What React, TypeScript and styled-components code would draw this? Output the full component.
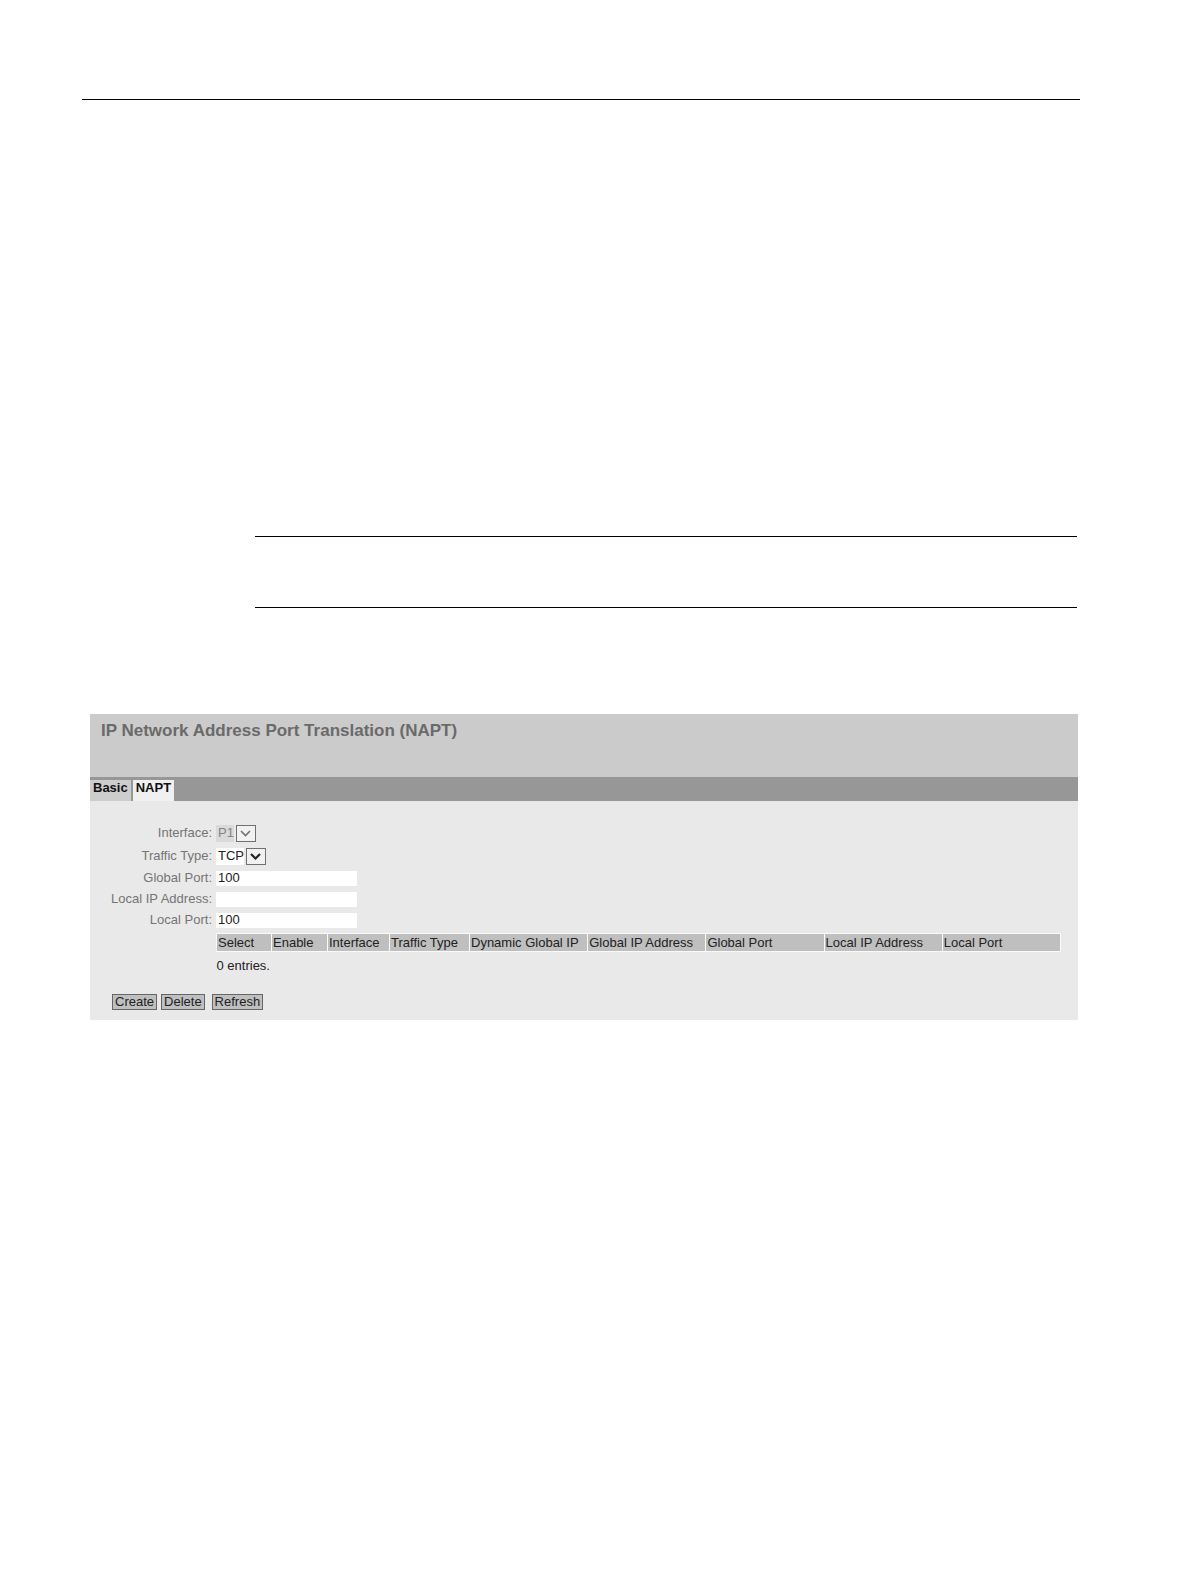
import { useState } from "react";
import styled, { createGlobalStyle } from "styled-components";

const GlobalStyle = createGlobalStyle`
  * {
    box-sizing: border-box;
  }
  body {
    margin: 0;
    background-color: #ffffff;
    font-family: "Liberation Sans", Arial, sans-serif;
    font-size: 13px;
    line-height: 15px;
    color: #222222;
  }
`;

const Page = styled.main`
  display: flex;
  flex-direction: column;
  min-height: 100vh;
  padding: 99px 111px 0 82px;
`;
const Rule = styled.hr`
  width: 100%;
  margin: 0;
  border: 0;
  border-top: 1px solid #000000;
`;
const Note = styled.section`
  height: 72px;
  margin: 436px 3px 106px 173px;
  border-top: 1px solid #000000;
  border-bottom: 1px solid #000000;
`;

const Panel = styled.section`
  margin: 0 2px 0 8px;
  background-color: #e9e9e9;
`;
const PanelHeader = styled.header`
  height: 63px;
  padding: 7px 11px;
  background-color: #cbcbcb;
`;
const Title = styled.h1`
  margin: 0;
  font-size: 17px;
  line-height: 20px;
  color: #6a6a6a;
`;
const TabBar = styled.nav`
  display: flex;
  gap: 2px;
  height: 24px;
  padding-top: 3px;
  background-color: #979797;
`;
const Tab = styled.a<{ $active?: boolean }>`
  padding: 0 3px;
  font-weight: bold;
  color: #111111;
  text-decoration: none;
  background-color: ${({ $active }) => ($active ? "#f0f0f0" : "#cdcdcd")};
`;

const Form = styled.form`
  padding: 21px 17px 10px 0;
`;
const Row = styled.div<{ $tall?: boolean }>`
  display: grid;
  grid-template-columns: 122px 1fr;
  column-gap: 4px;
  align-items: center;
  height: ${({ $tall }) => ($tall ? "23px" : "21px")};
`;
const Label = styled.label`
  padding-bottom: 2px;
  text-align: right;
  color: #757575;
`;
const TextInput = styled.input`
  width: 141px;
  height: 15px;
  padding: 0 2px 2px;
  border: 0;
  font: inherit;
  color: #222222;
  background-color: #ffffff;
`;
const SelectBox = styled.div`
  position: relative;
  justify-self: start;
  display: flex;
`;
const Select = styled.select`
  appearance: none;
  height: 17px;
  padding: 0 22px 2px 2px;
  border: 0;
  border-radius: 0;
  font: inherit;
  color: #222222;
  background-color: #ffffff;
  &:disabled {
    color: #858585;
    background-color: #dadada;
    opacity: 1;
  }
`;
const Arrow = styled.span<{ $disabled?: boolean }>`
  position: absolute;
  top: 0;
  right: 0;
  width: 22px;
  height: 17px;
  padding-left: 2px;
  background-color: #e9e9e9;
  color: ${({ $disabled }) => ($disabled ? "#707070" : "#222222")};
  pointer-events: none;
  svg {
    display: block;
  }
`;

const TableArea = styled.div`
  margin: 2px 0 0 126px;
`;
const Table = styled.table`
  width: 100%;
  table-layout: fixed;
  border-collapse: collapse;
`;
const HeadCell = styled.th<{ $width?: number }>`
  width: ${({ $width }) => ($width ? `${$width}px` : "auto")};
  height: 18px;
  padding: 0 1px;
  border: 1px solid #fafafa;
  font-weight: normal;
  text-align: left;
  white-space: nowrap;
  background-color: #bfbfbf;
`;
const EmptyCell = styled.td`
  height: 28px;
  padding: 0;
`;

const Actions = styled.div`
  display: flex;
  gap: 7px;
  padding: 14px 0 0 22px;
`;
const ButtonGroup = styled.div`
  display: flex;
  gap: 4px;
`;
const Button = styled.button`
  height: 16px;
  padding: 0 2px;
  border: 1px solid #666666;
  font: inherit;
  line-height: 14px;
  color: #222222;
  background-color: #bfbfbf;
`;

const columns = [
  { name: "Select", width: 55 },
  { name: "Enable", width: 56 },
  { name: "Interface", width: 62 },
  { name: "Traffic Type", width: 80 },
  { name: "Dynamic Global IP" },
  { name: "Global IP Address" },
  { name: "Global Port" },
  { name: "Local IP Address" },
  { name: "Local Port" },
];

const DropArrow = ({ disabled }: { disabled?: boolean }) => (
  <Arrow $disabled={disabled}>
    <svg width="20" height="17" viewBox="0 0 20 17" aria-hidden="true">
      <rect x="0.5" y="0.5" width="19" height="16" fill="#f1f1f1" stroke="#707070" />
      <path
        d="M5 6L9.5 10.5L14 6"
        fill="none"
        stroke="currentColor"
        strokeWidth={disabled ? 1.6 : 2.2}
      />
    </svg>
  </Arrow>
);

const App = () => {
  const [trafficType, setTrafficType] = useState("TCP");
  const [globalPort, setGlobalPort] = useState("100");
  const [localIp, setLocalIp] = useState("");
  const [localPort, setLocalPort] = useState("100");

  return (
    <>
      <GlobalStyle />
      <Page>
        <Rule />
        <Note />
        <Panel>
          <PanelHeader>
            <Title>IP Network Address Port Translation (NAPT)</Title>
          </PanelHeader>
          <TabBar>
            <Tab href="#basic">Basic</Tab>
            <Tab href="#napt" $active>
              NAPT
            </Tab>
          </TabBar>
          <Form onSubmit={(e) => e.preventDefault()}>
            <Row $tall>
              <Label htmlFor="interface">Interface:</Label>
              <SelectBox>
                <Select id="interface" disabled>
                  <option>P1</option>
                </Select>
                <DropArrow disabled />
              </SelectBox>
            </Row>
            <Row $tall>
              <Label htmlFor="trafficType">Traffic Type:</Label>
              <SelectBox>
                <Select
                  id="trafficType"
                  value={trafficType}
                  onChange={(e) => setTrafficType(e.target.value)}
                >
                  <option>TCP</option>
                </Select>
                <DropArrow />
              </SelectBox>
            </Row>
            <Row>
              <Label htmlFor="globalPort">Global Port:</Label>
              <TextInput
                id="globalPort"
                value={globalPort}
                onChange={(e) => setGlobalPort(e.target.value)}
              />
            </Row>
            <Row>
              <Label htmlFor="localIp">Local IP Address:</Label>
              <TextInput
                id="localIp"
                value={localIp}
                onChange={(e) => setLocalIp(e.target.value)}
              />
            </Row>
            <Row>
              <Label htmlFor="localPort">Local Port:</Label>
              <TextInput
                id="localPort"
                value={localPort}
                onChange={(e) => setLocalPort(e.target.value)}
              />
            </Row>
            <TableArea>
              <Table>
                <thead>
                  <tr>
                    {columns.map((column) => (
                      <HeadCell key={column.name} $width={column.width}>
                        {column.name}
                      </HeadCell>
                    ))}
                  </tr>
                </thead>
                <tbody>
                  <tr>
                    <EmptyCell colSpan={columns.length}>0 entries.</EmptyCell>
                  </tr>
                </tbody>
              </Table>
            </TableArea>
            <Actions>
              <ButtonGroup>
                <Button type="submit">Create</Button>
                <Button type="button">Delete</Button>
              </ButtonGroup>
              <Button type="button">Refresh</Button>
            </Actions>
          </Form>
        </Panel>
      </Page>
    </>
  );
};

export default App;
